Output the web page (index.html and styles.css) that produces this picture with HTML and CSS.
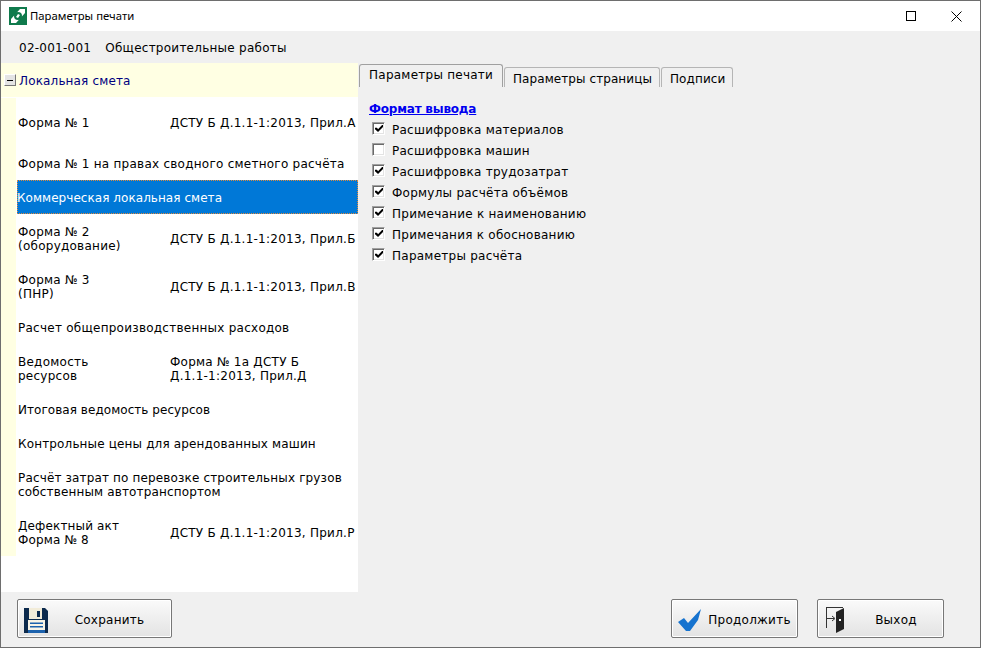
FILE: index.html
```html
<!DOCTYPE html>
<html lang="ru">
<head>
<meta charset="utf-8">
<title>Параметры печати</title>
<link rel="stylesheet" href="styles.css">
</head>
<body>
<div class="window">
  <header class="titlebar">
    <svg class="app-icon" width="18" height="18" viewBox="0 0 18 18"><rect width="18" height="18" fill="#0f7a4c"/><rect x="2" y="2" width="14" height="14" fill="#fff"/><path d="M2 2h9L2 12zM16 16H7l9-10z" fill="#0f7a4c"/><circle cx="9" cy="9" r="4" fill="#0f7a4c"/><path d="M7 10l2-3 2 1-2 3z" fill="#fff"/></svg>
    <span class="title">Параметры печати</span>
    <span class="win-buttons">
      <svg width="11" height="11" viewBox="0 0 11 11"><rect x=".5" y=".5" width="9" height="9" fill="none" stroke="#000"/></svg>
      <svg width="11" height="11" viewBox="0 0 11 11"><path d="M.5.5l10 10M10.500.5l-10 10" stroke="#000" fill="none"/></svg>
    </span>
  </header>
  <div class="code-row"><span>02-001-001</span><span>Общестроительные работы</span></div>
  <main class="main">
    <section class="tree">
      <div class="tree-head"><span class="toggle"></span><span class="snug">Локальная смета</span></div>
      <div class="tree-body">
        <div class="row tall"><span class="c1">Форма № 1</span><span class="c2">ДСТУ Б Д.1.1-1:2013, Прил.А</span></div>
        <div class="row"><span>Форма № 1 на правах сводного сметного расчёта</span></div>
        <div class="row selected"><span class="tight">Коммерческая локальная смета</span></div>
        <div class="row tall"><span class="c1">Форма № 2<br>(оборудование)</span><span class="c2">ДСТУ Б Д.1.1-1:2013, Прил.Б</span></div>
        <div class="row tall"><span class="c1">Форма № 3<br>(ПНР)</span><span class="c2">ДСТУ Б Д.1.1-1:2013, Прил.В</span></div>
        <div class="row"><span>Расчет общепроизводственных расходов</span></div>
        <div class="row tall"><span class="c1">Ведомость<br>ресурсов</span><span class="c2">Форма № 1а ДСТУ Б<br>Д.1.1-1:2013, Прил.Д</span></div>
        <div class="row"><span class="tight">Итоговая ведомость ресурсов</span></div>
        <div class="row"><span class="snug">Контрольные цены для арендованных машин</span></div>
        <div class="row tall"><span class="snug">Расчёт затрат по перевозке строительных грузов<br>собственным автотранспортом</span></div>
        <div class="row tall"><span class="c1 snug">Дефектный акт<br>Форма № 8</span><span class="c2">ДСТУ Б Д.1.1-1:2013, Прил.Р</span></div>
      </div>
      <div class="tree-rest"></div>
    </section>
    <section class="panel">
      <nav class="tabs">
        <span class="tab active">Параметры печати</span>
        <span class="tab t2">Параметры страницы</span>
        <span class="tab t3">Подписи</span>
      </nav>
      <a class="group-title">Формат вывода</a>
      <ul class="checks">
        <li><span class="box on"></span>Расшифровка материалов</li>
        <li><span class="box"></span>Расшифровка машин</li>
        <li><span class="box on"></span>Расшифровка трудозатрат</li>
        <li><span class="box on"></span>Формулы расчёта объёмов</li>
        <li><span class="box on"></span>Примечание к наименованию</li>
        <li><span class="box on"></span>Примечания к обоснованию</li>
        <li><span class="box on"></span>Параметры расчёта</li>
      </ul>
    </section>
  </main>
  <footer class="footer">
    <button class="btn save">
      <svg class="ico-save" width="24" height="25" viewBox="0 0 24 25"><path d="M0 0h21l3 3v22H0z" fill="#0c2a4d"/><path d="M5 0h13v11H5z" fill="#f2ecd9"/><path d="M13 3h3v6h-3z" fill="#0c2a4d"/><path d="M4 12h17v10H4z" fill="#f7f3e6"/><path d="M6 14.500h13v1.500H6zM6 18h13v1.500H6zM4 22h17v3H4z" fill="#1c62ad"/></svg>
      <span>Сохранить</span>
    </button>
    <span class="spacer"></span>
    <button class="btn go">
      <svg class="ico-go" width="24" height="23" viewBox="0 0 24 23"><path d="M0 13l6-4 4 5L23 0l-3 11-8 11H8z" fill="#1673cf"/></svg>
      <span>Продолжить</span>
    </button>
    <button class="btn exit">
      <svg class="ico-exit" width="19" height="26" viewBox="0 0 19 26"><path d="M.5 0v21M.5.500H17" stroke="#333" fill="none"/><path d="M10 5l8-4v21l-8 4z" fill="#222"/><path d="M1 11.500h7M6 9l3 2.500L6 14" stroke="#333" fill="none"/><rect x="13" y="12" width="2" height="2" fill="#fff"/></svg>
      <span>Выход</span>
    </button>
  </footer>
</div>
</body>
</html>
```
FILE: styles.css
```css
* { box-sizing: border-box; }
html, body { margin: 0; padding: 0; }
body { width: 981px; height: 648px; overflow: hidden; font: 12px/14px "DejaVu Sans", sans-serif; letter-spacing: .25px; color: #000; }
.window { width: 981px; height: 648px; display: flex; flex-direction: column; background: #f0f0f0; border: 1px solid #6e6e6e; }
.titlebar { height: 30px; flex: none; background: #fff; display: flex; align-items: center; padding-left: 8px; font: 11.300px/14px "Noto Sans", sans-serif; letter-spacing: 0; }
.app-icon { display: block; margin-right: 3px; }
.title { flex: 1; }
.win-buttons { display: flex; gap: 34px; margin-right: 18px; align-items: center; }
.win-buttons svg { display: block; }
.code-row { height: 32px; flex: none; display: flex; align-items: center; gap: 14px; padding: 1px 0 0 18px; }
.main { flex: 1; min-height: 0; display: flex; }
.tree { width: 357px; flex: none; display: flex; flex-direction: column; background: #fff; }
.tree-head { height: 34px; flex: none; background: #ffffe3; color: #000080; display: flex; align-items: center; padding: 2px 0 0 3px; margin-bottom: 1px; }
.toggle { width: 12px; height: 12px; flex: none; margin: 0 3px 2px 0; background: linear-gradient(#000, #000) center / 6px 1px no-repeat #e4e4e4; border: 1px solid #fff; border-right-color: #777; border-bottom-color: #777; }
.tree-body { border-left: 15px solid #ffffe3; flex: none; }
.tree-rest { flex: 1; }
.row { height: 34px; display: flex; align-items: center; padding: 2px 0 0 2px; }
.row.tall { height: 48px; }
.c1 { width: 152px; flex: none; }
.c2 { white-space: nowrap; }
.snug { letter-spacing: .15px; }
.tight { letter-spacing: .05px; }
.row.selected { background: #0078d7; color: #fff; margin-left: 1px; padding-left: 0; outline: 1px dotted #e08a3c; outline-offset: -1px; }
.panel { flex: 1; padding: 0 0 0 1px; }
.tabs { display: flex; height: 23px; margin-top: 1px; align-items: flex-end; }
.tab { height: 20px; padding: 2px 8px 0; border: 1px solid #b5b5b5; border-bottom: 0; border-radius: 3px 3px 0 0; margin-right: 1px; display: flex; align-items: center; white-space: nowrap; }
.tab.active { width: 144px; height: 23px; padding: 3px 9px 0; align-items: flex-start; border-color: #a0a0a0; }
.tab.t2 { width: 156px; letter-spacing: .08px; }
.tab.t3 { width: 72px; letter-spacing: .1px; }
.group-title { display: block; margin: 15px 0 0 10px; color: #0000f0; font-weight: 700; letter-spacing: -.2px; text-decoration: underline; }
.checks { list-style: none; margin: 2px 0 0; padding: 0 0 0 13px; }
.checks li { height: 21px; padding-top: 2px; display: flex; align-items: center; }
.box { width: 13px; height: 13px; flex: none; margin: 0 7px 2px 0; background: #fff; border: 1px solid; border-color: #a0a0a0 #fff #fff #a0a0a0; box-shadow: inset 1px 1px 0 #696969, inset -1px -1px 0 #e3e3e3; position: relative; }
.box.on::after { content: ""; position: absolute; left: 2px; top: 2px; width: 8px; height: 7px; background: #000; clip-path: polygon(0 40%, 25% 40%, 38% 62%, 88% 0, 100% 0, 100% 30%, 38% 100%, 0 60%); }
.footer { height: 55px; flex: none; display: flex; padding: 7px 36px 0 16px; gap: 19px; align-items: flex-start; }
.spacer { flex: 1; }
.btn { width: 127px; height: 39px; padding: 2px 4px 0 6px; font: inherit; letter-spacing: inherit; color: #000; border: 1px solid #777; border-radius: 2px; background: linear-gradient(#fafafa, #e3e3e3); display: flex; align-items: center; box-shadow: inset 0 0 0 1px #fff; }
.btn span { flex: 1; text-align: center; }
.btn.save { width: 155px; }
.btn.save span { padding-left: 4px; }
.btn.go span { padding-left: 4px; }
.btn.exit { padding-left: 8px; }
.btn.exit span { padding-left: 8px; }
.ico-save, .ico-exit { flex: none; margin-top: 1px; }
.ico-go { flex: none; margin-top: 2px; }
```
